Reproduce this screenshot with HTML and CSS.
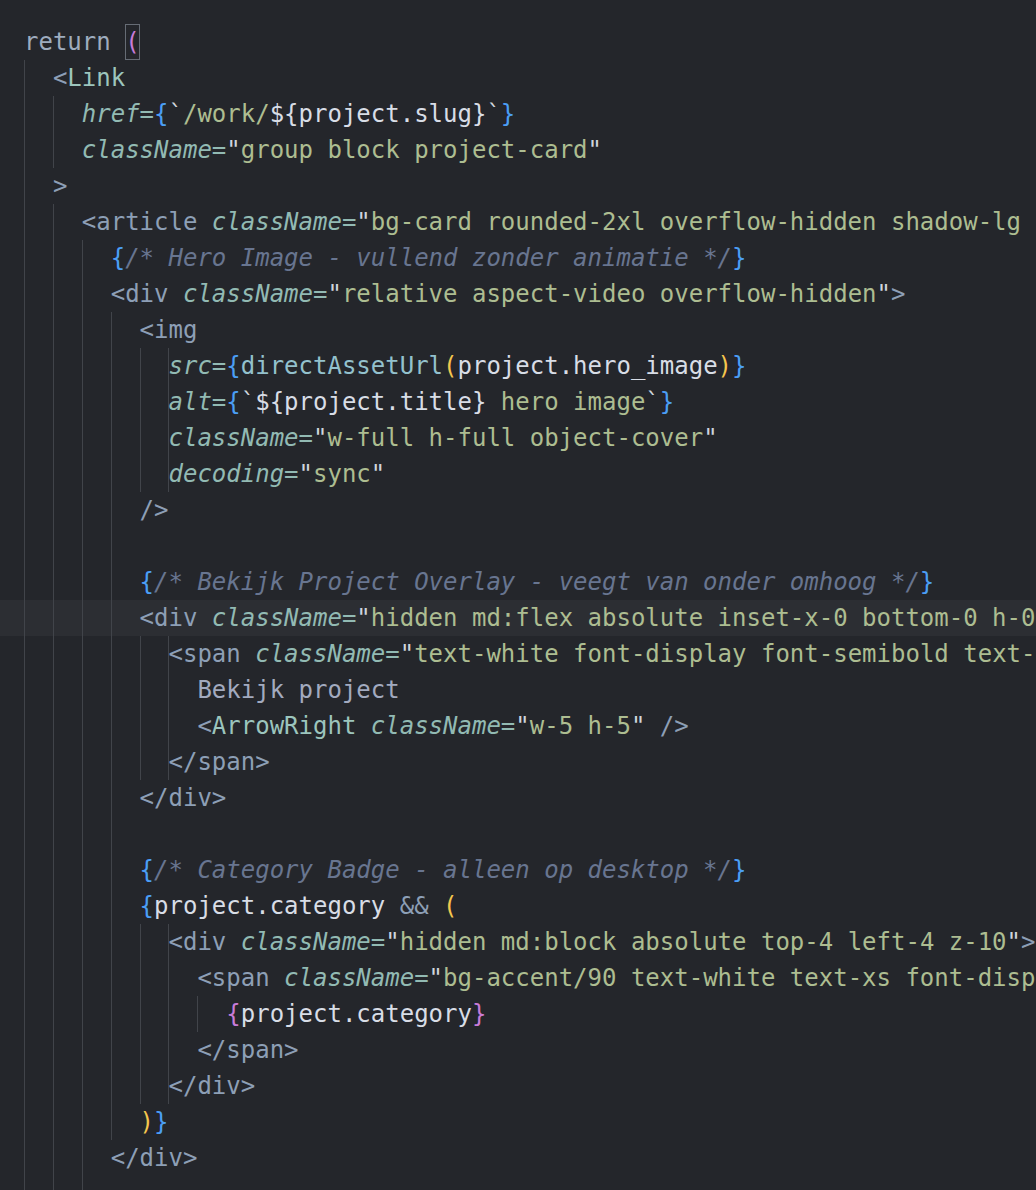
FILE: index.html
```html
<!DOCTYPE html>
<html lang="en">
<head>
<meta charset="utf-8">
<title>Editor</title>
<link rel="stylesheet" href="styles.css">
</head>
<body>
<div class="editor">
<div class="ln"><span class="kw">return</span> <span class="pk box">(</span></div>
<div class="ln"><span class="ind">  </span><span class="tg">&lt;</span><span class="cm">Link</span></div>
<div class="ln"><span class="ind">    </span><span class="at">href=</span><span class="bl">{</span><span class="q">`</span><span class="st">/work/</span><span class="id">${project.slug}</span><span class="q">`</span><span class="bl">}</span></div>
<div class="ln"><span class="ind">    </span><span class="at">className=</span><span class="q">"</span><span class="st">group block project-card</span><span class="q">"</span></div>
<div class="ln"><span class="ind">  </span><span class="tg">&gt;</span></div>
<div class="ln"><span class="ind">    </span><span class="tg">&lt;article</span> <span class="at">className=</span><span class="q">"</span><span class="st">bg-card rounded-2xl overflow-hidden shadow-lg</span></div>
<div class="ln"><span class="ind">      </span><span class="bl">{</span><span class="co">/* Hero Image - vullend zonder animatie */</span><span class="bl">}</span></div>
<div class="ln"><span class="ind">      </span><span class="tg">&lt;div</span> <span class="at">className=</span><span class="q">"</span><span class="st">relative aspect-video overflow-hidden</span><span class="q">"</span><span class="tg">&gt;</span></div>
<div class="ln"><span class="ind">        </span><span class="tg">&lt;img</span></div>
<div class="ln"><span class="ind">          </span><span class="at">src=</span><span class="bl">{</span><span class="fn">directAssetUrl</span><span class="yl">(</span><span class="id">project.hero_image</span><span class="yl">)</span><span class="bl">}</span></div>
<div class="ln"><span class="ind">          </span><span class="at">alt=</span><span class="bl">{</span><span class="q">`</span><span class="id">${project.title}</span><span class="st"> hero image</span><span class="q">`</span><span class="bl">}</span></div>
<div class="ln"><span class="ind">          </span><span class="at">className=</span><span class="q">"</span><span class="st">w-full h-full object-cover</span><span class="q">"</span></div>
<div class="ln"><span class="ind">          </span><span class="at">decoding=</span><span class="q">"</span><span class="st">sync</span><span class="q">"</span></div>
<div class="ln"><span class="ind">        </span><span class="tg">/&gt;</span></div>
<div class="ln"><span class="ind">        </span></div>
<div class="ln"><span class="ind">        </span><span class="bl">{</span><span class="co">/* Bekijk Project Overlay - veegt van onder omhoog */</span><span class="bl">}</span></div>
<div class="ln cur"><span class="ind">        </span><span class="tg">&lt;div</span> <span class="at">className=</span><span class="q">"</span><span class="st">hidden md:flex absolute inset-x-0 bottom-0 h-0</span></div>
<div class="ln"><span class="ind">          </span><span class="tg">&lt;span</span> <span class="at">className=</span><span class="q">"</span><span class="st">text-white font-display font-semibold text-</span></div>
<div class="ln"><span class="ind">            </span><span class="tx">Bekijk project</span></div>
<div class="ln"><span class="ind">            </span><span class="tg">&lt;</span><span class="cm">ArrowRight</span> <span class="at">className=</span><span class="q">"</span><span class="st">w-5 h-5</span><span class="q">"</span> <span class="tg">/&gt;</span></div>
<div class="ln"><span class="ind">          </span><span class="tg">&lt;/span&gt;</span></div>
<div class="ln"><span class="ind">        </span><span class="tg">&lt;/div&gt;</span></div>
<div class="ln"><span class="ind">        </span></div>
<div class="ln"><span class="ind">        </span><span class="bl">{</span><span class="co">/* Category Badge - alleen op desktop */</span><span class="bl">}</span></div>
<div class="ln"><span class="ind">        </span><span class="bl">{</span><span class="id">project.category</span> <span class="tg">&amp;&amp;</span> <span class="yl">(</span></div>
<div class="ln"><span class="ind">          </span><span class="tg">&lt;div</span> <span class="at">className=</span><span class="q">"</span><span class="st">hidden md:block absolute top-4 left-4 z-10</span><span class="q">"</span><span class="tg">&gt;</span></div>
<div class="ln"><span class="ind">            </span><span class="tg">&lt;span</span> <span class="at">className=</span><span class="q">"</span><span class="st">bg-accent/90 text-white text-xs font-disp</span></div>
<div class="ln"><span class="ind">              </span><span class="pk">{</span><span class="id">project.category</span><span class="pk">}</span></div>
<div class="ln"><span class="ind">            </span><span class="tg">&lt;/span&gt;</span></div>
<div class="ln"><span class="ind">          </span><span class="tg">&lt;/div&gt;</span></div>
<div class="ln"><span class="ind">        </span><span class="yl">)</span><span class="bl">}</span></div>
<div class="ln"><span class="ind">      </span><span class="tg">&lt;/div&gt;</span></div>
<div class="ln"><span class="ind">      </span></div>
</div>
</body>
</html>
```
FILE: styles.css
```css
html, body {
  margin: 0;
  padding: 0;
  background: #24262b;
  overflow: hidden;
}

.editor {
  padding-top: 24px;
  font-family: "DejaVu Sans Mono", "Liberation Mono", monospace;
  font-size: 24px;
  line-height: 36px;
  color: #d8dde6;
}

.ln {
  height: 36px;
  padding-left: 24px;
  white-space: pre;
  overflow: hidden;
}

.ln.cur {
  background: #2c2e33;
}

.ind {
  display: inline-block;
  height: 36px;
  vertical-align: top;
  background-image: repeating-linear-gradient(to right, #41444a 0, #41444a 1px, transparent 1px, transparent 2ch);
}

.kw { color: #9eacbf; }
.tg { color: #8d9fb6; }
.cm { color: #9cc5bd; }
.at { color: #92bab3; font-style: italic; }
.st { color: #adbd91; }
.q  { color: #cfd5dd; }
.bl { color: #4b9ef5; }
.yl { color: #f4c64e; }
.pk { color: #c87bd8; }
.co { color: #687590; font-style: italic; }
.id { color: #d8dde6; }
.fn { color: #93c1cd; }
.tx { color: #a2aabf; }

.box {
  display: inline-block;
  height: 36px;
  line-height: 36px;
  vertical-align: top;
  box-shadow: inset 0 0 0 1px #666c75;
}
```
